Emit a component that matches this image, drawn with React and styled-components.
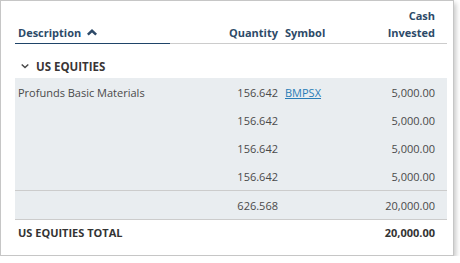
import React from "react";
import styled, { createGlobalStyle } from "styled-components";

const Global = createGlobalStyle`
  html, body { margin: 0; padding: 0; background: #ffffff; }
  body { font-family: "Open Sans", "Noto Sans", sans-serif; }
`;

const COLS = "155px 40px 71px 74px 92px";

const Card = styled.div`
  box-sizing: border-box;
  width: 454px;
  border: 1px solid #c6c6c6;
  box-shadow: 2px 3px 5px rgba(0, 0, 0, 0.22);
  background: #fff;
  padding: 6px 6px 11px 14px;
  font-size: 11px;
  color: #4a4a4a;
`;

const Row = styled.div`
  display: grid;
  grid-template-columns: ${COLS};
  align-items: ${(p) => (p.$head ? "end" : "center")};
  height: ${(p) => p.$h || "auto"};
  background: ${(p) => (p.$shade ? "#e9edf0" : "transparent")};
  border-top: ${(p) => (p.$top ? "1px solid #cccccc" : "none")};
  border-bottom: ${(p) => (p.$bottom ? "1px solid #cccccc" : "none")};
  font-weight: ${(p) => (p.$bold ? 700 : 400)};
  color: ${(p) => (p.$bold ? "#333333" : "inherit")};
`;

const HeadCell = styled.div`
  line-height: 17px;
  padding-bottom: 2px;
  border-bottom: 1px solid ${(p) => (p.$active ? "#1f4468" : "#cccccc")};
  font-weight: 700;
  color: #2d4a68;
  padding-left: ${(p) => p.$pl || "0"};
  padding-right: ${(p) => p.$pr || "0"};
  display: flex;
  align-items: center;
  justify-content: ${(p) => (p.$align === "right" ? "flex-end" : "flex-start")};
  text-align: ${(p) => p.$align || "left"};
  gap: 6px;
  min-height: 17px;
`;

const Cell = styled.div`
  grid-column: ${(p) => p.$span || "auto"};
  text-align: ${(p) => p.$align || "left"};
  padding-left: ${(p) => p.$pl || "0"};
  padding-right: ${(p) => p.$pr || "0"};
  white-space: nowrap;
  line-height: 17px;
`;

const GroupRow = styled.div`
  display: flex;
  align-items: center;
  gap: 7px;
  height: 34px;
  box-sizing: border-box;
  padding: 14px 0 3px 6px;
  line-height: 17px;
  font-weight: 700;
  font-size: 11.5px;
  color: #3a3535;
`;

const Link = styled.a`
  color: #2a7db7;
  text-decoration: underline;
`;

const TotalRow = styled(Row)`
  height: 24px;
`;

const Caret = () => (
  <svg width="10" height="7" viewBox="0 0 10 7">
    <path d="M5 0 L10 4.8 L8.3 6.6 L5 3.5 L1.7 6.6 L0 4.8 Z" fill="#2d4a68" />
  </svg>
);

const Chevron = () => (
  <svg width="8" height="5" viewBox="0 0 8 5">
    <path d="M0.2 0.9 L1.2 0 L4 2.6 L6.8 0 L7.8 0.9 L4 4.5 Z" fill="#4a4a4a" />
  </svg>
);

const rows = [
  { desc: "Profunds Basic Materials", qty: "156.642", sym: "BMPSX", cash: "5,000.00" },
  { desc: "", qty: "156.642", sym: "", cash: "5,000.00" },
  { desc: "", qty: "156.642", sym: "", cash: "5,000.00" },
  { desc: "", qty: "156.642", sym: "", cash: "5,000.00" },
];

export default function App() {
  return (
    <>
      <Global />
      <Card>
        <Row $head>
          <HeadCell $active $pl="3px">
            Description <Caret />
          </HeadCell>
          <HeadCell />
          <HeadCell $align="right" $pr="3px">Quantity</HeadCell>
          <HeadCell $pl="4px">Symbol</HeadCell>
          <HeadCell $align="right" $pr="12px">
            <span>Cash<br />Invested</span>
          </HeadCell>
        </Row>
        <GroupRow>
          <Chevron />
          US EQUITIES
        </GroupRow>
        {rows.map((r, i) => (
          <Row key={i} $shade $h="28px">
            <Cell $span="1 / 3" $pl="3px">{r.desc}</Cell>
            <Cell $align="right" $pr="3px">{r.qty}</Cell>
            <Cell $pl="4px">{r.sym && <Link href="#">{r.sym}</Link>}</Cell>
            <Cell $align="right" $pr="12px">{r.cash}</Cell>
          </Row>
        ))}
        <Row $shade $h="28px" $top $bottom>
          <Cell $span="1 / 3" />
          <Cell $align="right" $pr="3px">626.568</Cell>
          <Cell />
          <Cell $align="right" $pr="12px">20,000.00</Cell>
        </Row>
        <TotalRow $bold>
          <Cell $span="1 / 4" $pl="3px">US EQUITIES TOTAL</Cell>
          <Cell />
          <Cell $align="right" $pr="12px">20,000.00</Cell>
        </TotalRow>
      </Card>
    </>
  );
}
